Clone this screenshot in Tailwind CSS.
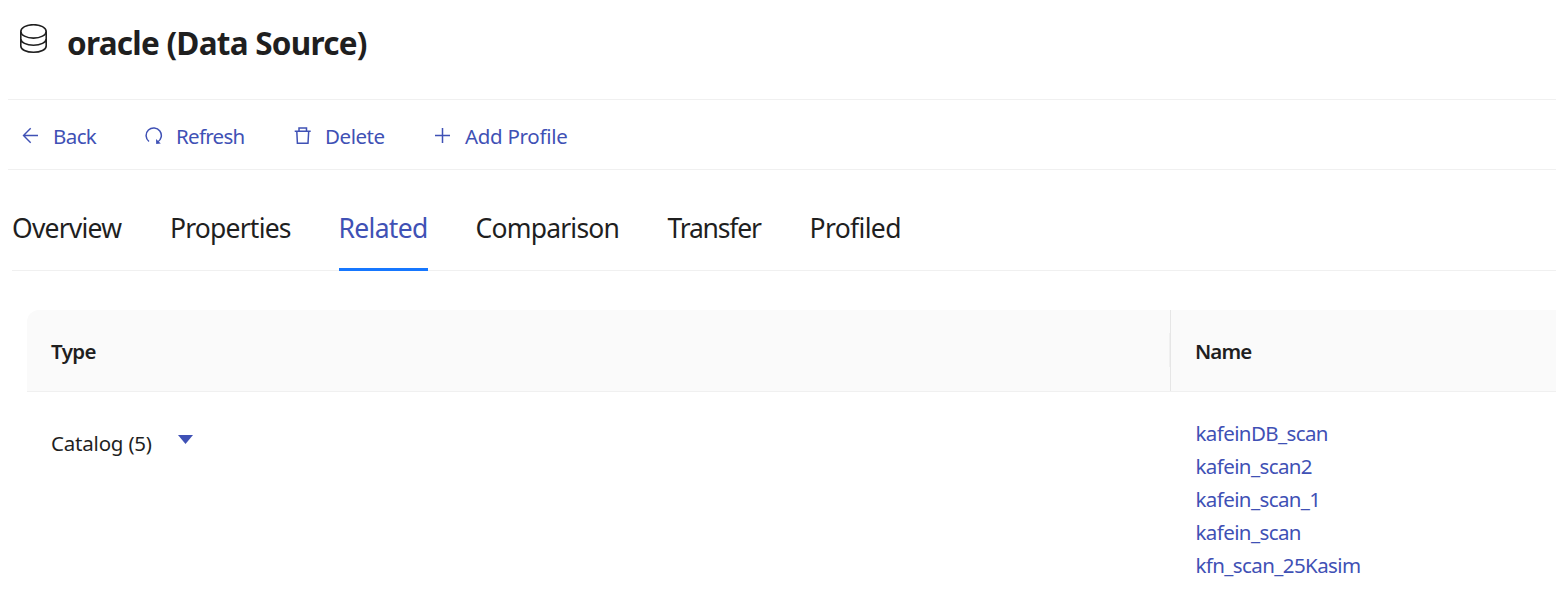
<!DOCTYPE html>
<html lang="en">
<head>
<meta charset="utf-8">
<title>oracle (Data Source)</title>
<script src="https://cdn.jsdelivr.net/npm/@tailwindcss/browser@4"></script>
</head>
<body class="w-[1556px] h-[598px] overflow-hidden bg-white font-['Noto_Sans','Open_Sans',sans-serif] text-[20.5px] text-[#1f1f1f]">
<header class="ml-2 h-[100px] flex border-b border-[#f0f0f0] pl-3">
  <svg class="mt-6 w-[28px] h-[30px] shrink-0" viewBox="0 0 28 30" fill="none" stroke="#1f1f1f" stroke-width="1.6">
    <ellipse cx="13.5" cy="7.4" rx="12.7" ry="6.7"/>
    <path d="M.8 7.4V22C.8 25.6 6.4 28.3 13.5 28.3S26.2 25.6 26.2 22V7.4M.8 14.8C.8 18.4 6.4 21.3 13.5 21.3S26.2 18.4 26.2 14.8"/>
  </svg>
  <h1 class="ml-[19px] mt-[23px] h-10 leading-10 text-[31.5px] font-bold whitespace-nowrap tracking-[-0.75px]">oracle (Data Source)</h1>
</header>
<nav class="ml-2 h-[70px] flex items-start pt-[18px] border-b border-[#f0f0f0] text-[#3f51b5] leading-9 whitespace-nowrap">
  <a class="flex w-[122px] pl-[14px]"><svg class="w-[17px] h-[17px] mt-[9px] mr-[14px]" viewBox="0 0 17 17" fill="none" stroke="currentColor" stroke-width="1.4"><path d="M16 8.5H1.5M8.7 1.2 1.5 8.5l7.2 7.3"/></svg><span class="tracking-[-0.6px]">Back</span></a>
  <a class="flex w-[149px] pl-[15px]"><svg class="w-[18px] h-[18px] mt-[9px] mr-[13px]" viewBox="0 0 18 18" fill="none" stroke="currentColor" stroke-width="1.5"><path d="M4 14.5A7.6 7.6 0 1 1 12.4 15.2"/><path d="m11 11.9 .2 5.1 4.6-.6z" fill="currentColor" stroke="none"/></svg><span class="tracking-[-0.7px]">Refresh</span></a>
  <a class="flex w-[140px] pl-[15px]"><svg class="w-[18px] h-[18px] mt-[9px] mr-[13px]" viewBox="0 0 18 18" fill="none" stroke="currentColor" stroke-width="1.5"><path d="M.7 4.2h16M5 4.2V1h7.5v3.2M2.8 4.2l.6 12h10.6L14.7 4.2"/></svg><span class="tracking-[-0.45px]">Delete</span></a>
  <a class="flex pl-[15px]"><svg class="w-[17px] h-[17px] mt-[9px] mr-[14px]" viewBox="0 0 17 17" fill="none" stroke="currentColor" stroke-width="1.5"><path d="M1 8.5h15M8.5 1v15"/></svg><span class="tracking-[-0.3px]">Add Profile</span></a>
</nav>
<div class="ml-3 h-[101px] flex border-b border-[#f0f0f0] text-[26.5px] leading-[40px] pt-[38px] whitespace-nowrap tracking-[-0.8px]">
  <div class="w-[158px]">Overview</div>
  <div class="w-[168.5px]">Properties</div>
  <div class="w-[89px] h-[63px] mr-[48px] border-b-3 border-[#1677ff] text-[#3f51b5] tracking-[-0.7px]">Related</div>
  <div class="w-[192px]">Comparison</div>
  <div class="w-[142px] tracking-[-1.2px]">Transfer</div>
  <div class="tracking-[-0.65px]">Profiled</div>
</div>
<main class="ml-[27px] mt-[39px]">
  <div class="h-[82px] flex bg-[#fafafa] border-b border-[#f0f0f0] rounded-tl-xl font-semibold leading-[83px]">
    <div class="w-[1143px] pl-6 tracking-[-0.6px] flex justify-between">Type<span class="w-px h-[34px] mt-[23px] bg-[#f0f0f0]"></span></div>
    <div class="flex-1 border-l border-[#e6e6e6] pl-[24px] tracking-[-0.9px]">Name</div>
  </div>
  <div class="flex leading-[33px]">
    <div class="w-[1144px] pl-6 pt-[35px] flex tracking-[-0.2px]">Catalog (5)
      <svg class="w-[15px] h-[9px] mt-[8px] ml-[26px]" viewBox="0 0 15 9"><path d="M0 0h15L7.5 9z" fill="#3f51b5"/></svg></div>
    <div class="pl-[24.5px] pt-[25px] flex flex-col items-start text-[#3f51b5] tracking-[-0.6px]">
      <a>kafeinDB_scan</a><a>kafein_scan2</a><a>kafein_scan_1</a><a>kafein_scan</a><a>kfn_scan_25Kasim</a>
    </div>
  </div>
</main>
</body>
</html>
